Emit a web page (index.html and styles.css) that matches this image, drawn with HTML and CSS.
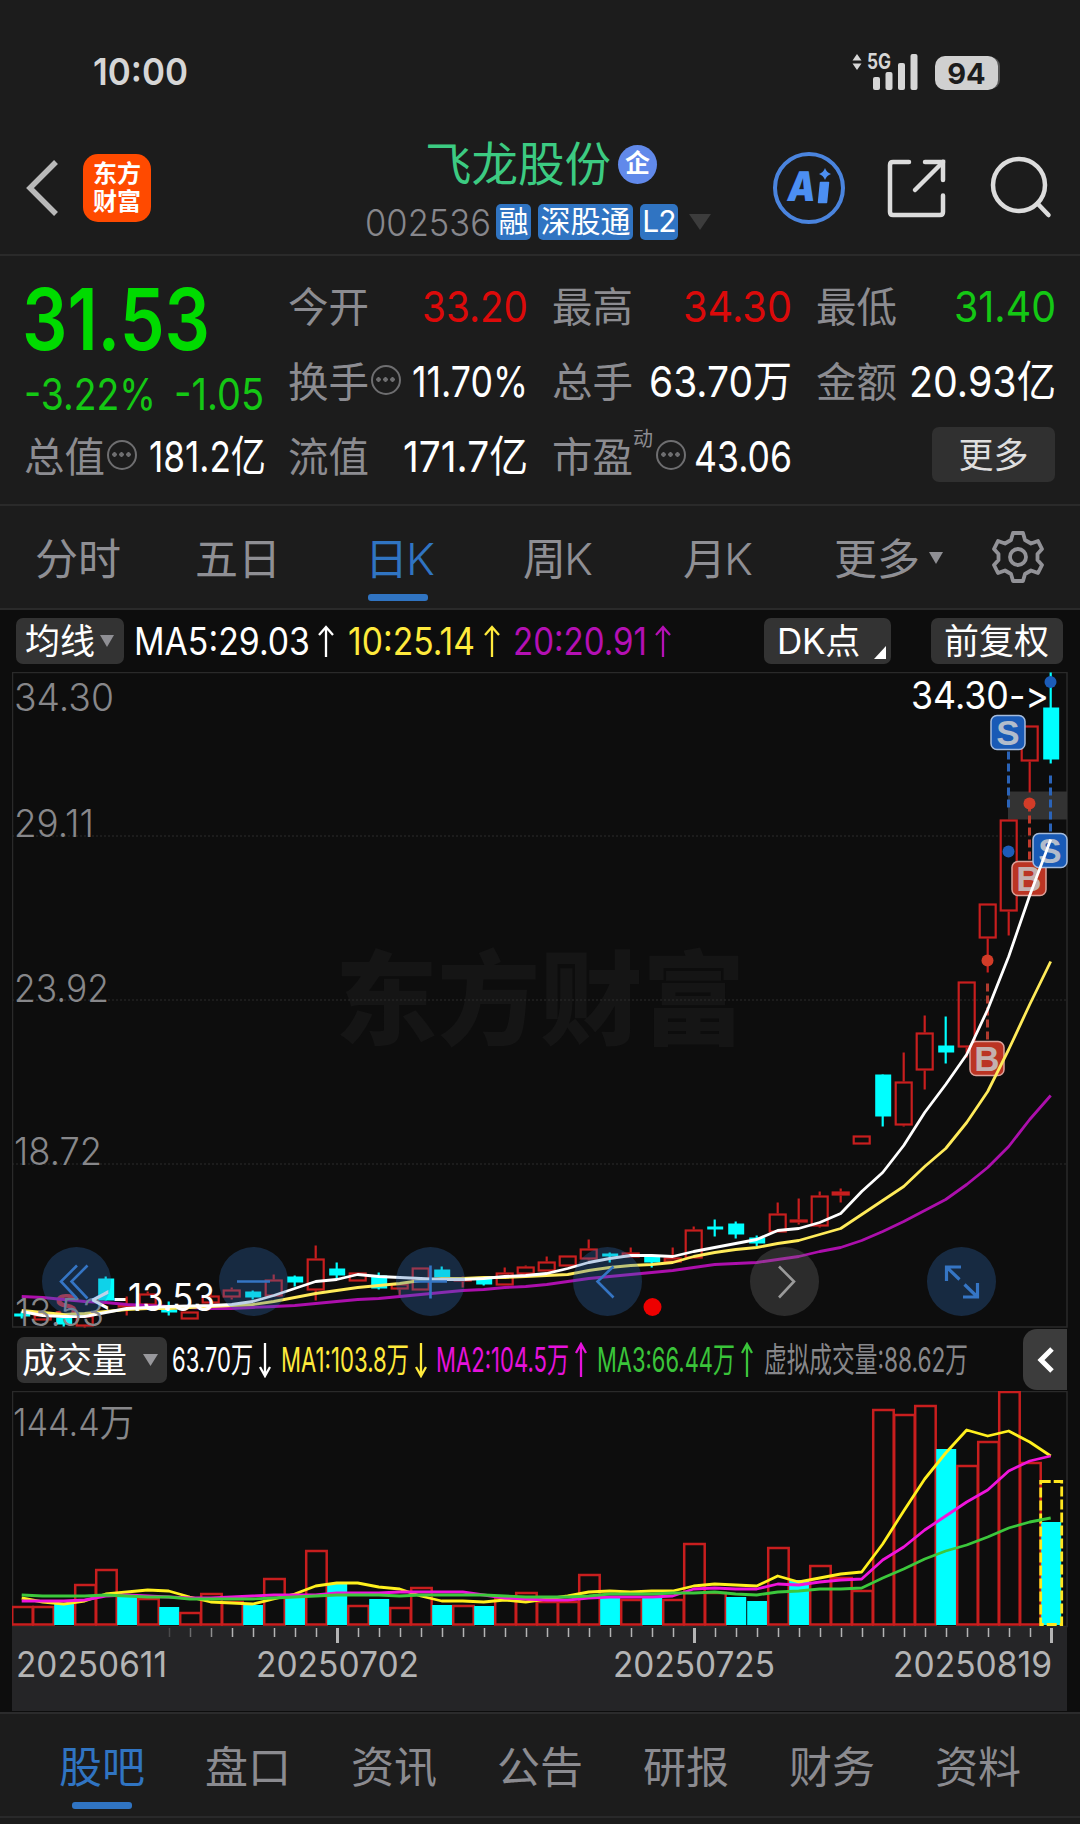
FILE: index.html
```html
<!DOCTYPE html>
<html lang="zh-CN">
<head>
<meta charset="utf-8">
<title>飞龙股份 002536</title>
<link rel="stylesheet" href="styles.css">
</head>
<body>
<div class="status">
  <span class="clock" data-fit="95">10:00</span>
  <svg class="arrows" width="10" height="16" viewBox="0 0 10 16"><path d="M5 0l4.500 6.500h-9zM5 16l4.500-6.500h-9z" fill="#d6d6d6"/></svg>
  <span class="fiveg" data-fit="24">5G</span>
  <svg class="signal" width="52" height="38" viewBox="0 0 52 38"><g fill="#d6d6d6"><rect x="6" y="24" width="7" height="13" rx="2"/><rect x="18.500" y="19" width="7" height="18" rx="2"/><rect x="31" y="10" width="7" height="27" rx="2"/><rect x="43.500" y="1" width="7" height="36" rx="2"/></g></svg>
  <span class="battery">94</span>
</div>

<header class="header">
  <svg class="back" width="34" height="58" viewBox="0 0 34 58"><path d="M31 3L5 29l26 26" fill="none" stroke="#b9b9b9" stroke-width="5.500"/></svg>
  <div class="logo"><span>东方</span><span>财富</span></div>
  <div class="title">
    <div class="name-row"><span class="name">飞龙股份</span><span class="badge">企</span></div>
    <div class="code-row"><span class="code" data-fit="126">002536</span><span class="tag t1">融</span><span class="tag t3">深股通</span><span class="tag t2">L2</span><svg width="22" height="16" viewBox="0 0 22 16"><path d="M0 0h22L11 16z" fill="#3c3c3c"/></svg></div>
  </div>
  <svg class="ai" width="76" height="76" viewBox="0 0 76 76"><circle cx="38" cy="38" r="34" fill="none" stroke="#4a84de" stroke-width="4"/><text transform="translate(15 51) skewX(-8)" class="ai-text" textLength="28" lengthAdjust="spacingAndGlyphs">A</text><path d="M49.500 32.500h8l-2 20h-8z" fill="#4c8ff2" stroke="#4c8ff2" stroke-width="1.500" stroke-linejoin="round"/><path d="M54 18q1.500 4.500 6 6-4.500 1.500-6 6-1.500-4.500-6-6 4.500-1.500 6-6z" fill="#4c8ff2"/></svg>
  <svg class="share" width="62" height="62" viewBox="0 0 62 62"><g fill="none" stroke="#dcdcdc" stroke-width="4.500" stroke-linecap="round"><path d="M22 5H6q-3 0-3 3v47q0 3 3 3h47q3 0 3-3V38.500M38 5h18v18"/><path d="M56 5L28 33"/></g></svg>
  <svg class="search" width="66" height="66" viewBox="0 0 66 66"><g fill="none" stroke="#dcdcdc" stroke-width="4.500" stroke-linecap="round"><circle cx="32" cy="31" r="26"/><path d="M50.500 49.500l11 11.500"/></g></svg>
</header>

<section class="quote">
  <div class="last">
    <span class="price" data-fit="188">31.53</span>
    <div class="change"><span data-fit="132">-3.22%</span><span data-fit="90">-1.05</span></div>
    <div class="cell"><label>总值</label><i class="info"></i><b data-fit="117">181.2亿</b></div>
  </div>
  <div class="stats">
    <div class="cell"><label>今开</label><b class="up" data-fit="106">33.20</b></div>
    <div class="cell"><label>最高</label><b class="up" data-fit="109">34.30</b></div>
    <div class="cell"><label>最低</label><b class="down" data-fit="102">31.40</b></div>
    <div class="cell"><label>换手</label><i class="info"></i><b data-fit="116">11.70%</b></div>
    <div class="cell"><label>总手</label><b data-fit="143">63.70万</b></div>
    <div class="cell"><label>金额</label><b data-fit="147">20.93亿</b></div>
    <div class="cell"><label>流值</label><b data-fit="125">171.7亿</b></div>
    <div class="cell"><label>市盈<sup>动</sup></label><i class="info"></i><b data-fit="98">43.06</b></div>
    <div class="cell"><button class="more">更多</button></div>
  </div>
</section>

<nav class="periods">
  <a class="p1">分时</a><a class="p2">五日</a><a class="p3 active">日<span class="k">K</span></a><a class="p4">周<span class="k">K</span></a><a class="p5">月<span class="k">K</span></a><a class="p6">更多</a>
  <svg class="caret" width="14" height="12" viewBox="0 0 14 12"><path d="M0 0h14L7 12z" fill="#8f8f94"/></svg>
  <svg class="gear" width="54" height="54" viewBox="0 0 54 54"><g fill="none" stroke="#929297" stroke-width="3.800" stroke-linejoin="round"><path d="M22 3h10l2 7 6 3.500 7-2.500 4 8-4.500 5v6l4.500 5-4 8-7-2.500L34 44l-2 7H22l-2-7-6-3.500L7 43l-4-8 4.500-5v-6L3 19l4-8 7 2.500L20 10z"/><circle cx="27" cy="27" r="8"/></g></svg>
</nav>

<main class="charts">
  <div class="legend ma">
    <span class="pill line-pill">均线<svg width="14" height="12" viewBox="0 0 14 12"><path d="M0 0h14L7 12z" fill="#8f8f94"/></svg></span>
    <span class="white" data-fit="176">MA5:29.03</span><svg class="arrow" width="18" height="34" viewBox="0 0 18 34"><path d="M9 33V3M2 11l7-8 7 8" stroke="#fff"/></svg>
    <span class="yellow" data-fit="127">10:25.14</span><svg class="arrow" width="18" height="34" viewBox="0 0 18 34"><path d="M9 33V3M2 11l7-8 7 8" stroke="#ffea3c"/></svg>
    <span class="purple" data-fit="134">20:20.91</span><svg class="arrow" width="18" height="34" viewBox="0 0 18 34"><path d="M9 33V3M2 11l7-8 7 8" stroke="#b410b4"/></svg>
    <span class="pill dk">DK点<svg width="12" height="13" viewBox="0 0 12 13"><path d="M12 0v13H0z" fill="#fff"/></svg></span>
    <span class="pill adj">前复权</span>
  </div>
  <svg id="price" class="panel" width="1056" height="656" viewBox="12 672.500 1056 656"></svg>
  <div class="legend vol">
    <span class="pill vol-pill">成交量<svg width="15" height="12" viewBox="0 0 15 12"><path d="M0 0h15L7.500 12z" fill="#98989c"/></svg></span>
    <span class="white" data-fit="81">63.70万</span><svg class="arrow" width="12" height="36" viewBox="0 0 12 36"><path d="M6 1v33M1 25l5 9 5-9" stroke="#fff"/></svg>
    <span class="yellow" data-fit="128">MA1:103.8万</span><svg class="arrow" width="12" height="36" viewBox="0 0 12 36"><path d="M6 1v33M1 25l5 9 5-9" stroke="#ffea3c"/></svg>
    <span class="magenta" data-fit="133">MA2:104.5万</span><svg class="arrow" width="12" height="36" viewBox="0 0 12 36"><path d="M6 35V2M1 11l5-9 5 9" stroke="#e612dc"/></svg>
    <span class="green" data-fit="138">MA3:66.44万</span><svg class="arrow" width="12" height="36" viewBox="0 0 12 36"><path d="M6 35V2M1 11l5-9 5 9" stroke="#3ac43a"/></svg>
    <span class="gray" data-fit="204">虚拟成交量:88.62万</span>
    <span class="fold"><svg width="18" height="28" viewBox="0 0 18 28"><path d="M16 3L5 14l11 11" fill="none" stroke="#fff" stroke-width="5"/></svg></span>
  </div>
  <svg id="volume" class="panel" width="1056" height="320" viewBox="12 1392 1056 320"></svg>
</main>

<nav class="tabs">
  <a class="active">股吧</a><a>盘口</a><a>资讯</a><a>公告</a><a>研报</a><a>财务</a><a>资料</a>
</nav>
<script src="chart.js"></script>
</body>
</html>
```

FILE: styles.css
```css
* { box-sizing: border-box; }

body {
  margin: 0;
  width: 1080px;
  height: 1824px;
  overflow: hidden;
  background: #1c1c1c;
  color: #fff;
  font-family: Inter, "Noto Sans CJK SC", sans-serif;
}

svg { display: block; flex: none; }

[data-fit] {
  display: inline-block;
  flex: none;
  white-space: pre;
  transform-origin: 0 50%;
}

/* status bar */
.status {
  display: flex;
  align-items: flex-start;
  height: 115px;
  padding: 53px 0 0 93px;
}
.clock { margin-top: -4px; font-size: 37px; line-height: 46px; font-weight: 600; color: #d6d6d6; }
.arrows { margin: 1px 5px 0 664px; }
.fiveg { margin: -4px -24px 0 0; font-size: 21px; line-height: 26px; font-weight: 700; color: #d6d6d6; }
.signal { margin-right: 16px; }
.battery {
  width: 63px;
  height: 34px;
  margin-top: 3px;
  border-radius: 10px;
  background: #d0d0d0;
  box-shadow: 3px 0 0 -1px #555;
  color: #1c1c1c;
  font-size: 29px;
  line-height: 35px;
  font-weight: 700;
  text-align: center;
}

/* header */
.header {
  display: flex;
  align-items: flex-start;
  height: 141px;
  padding-top: 39px;
  border-bottom: 2px solid #2a2a2a;
}
.back { margin: 5px 24px 0 25px; }
.logo {
  display: grid;
  place-content: center;
  width: 68px;
  height: 68px;
  border-radius: 15px;
  background: #ff4a00;
  font-size: 24px;
  line-height: 28px;
  font-weight: 700;
}
.title { width: 350px; margin: -19px 0 0 214px; }
.name-row { display: flex; align-items: center; height: 58px; padding-left: 60px; }
.name { font-size: 46.5px; line-height: 58px; color: #3ccb82; }
.badge {
  width: 39px;
  height: 39px;
  margin-left: 7px;
  border-radius: 50%;
  background: #6189ea;
  font-size: 25px;
  line-height: 36px;
  font-weight: 700;
  text-align: center;
}
.code-row { display: flex; align-items: center; height: 36px; margin-top: 11px; }
.code { margin-right: 5px; font-size: 37px; font-weight: 350; color: #87878c; }
.tag {
  height: 36px;
  margin-right: 7px;
  border-radius: 5px;
  background: #3074c2;
  font-size: 30px;
  line-height: 34px;
  text-align: center;
}
.t1 { width: 35px; }
.t3 { width: 95px; }
.t2 { width: 38px; margin-right: 11px; letter-spacing: -1px; }
.ai { margin: -4px 40px 0 56px; }
.ai-text { font: 900 41px Inter, sans-serif; fill: #4c8ff2; }
.share { margin: 3px 38px 0 0; }

/* quote */
.quote {
  display: flex;
  height: 250px;
  padding: 15px 0 0 24px;
  border-bottom: 2px solid #2a2a2a;
}
.last { width: 264px; }
.price { height: 90px; margin: 4px 0 0 -2px; font-size: 85px; line-height: 90px; font-weight: 600; color: #00db00; }
.change { display: flex; gap: 18px; height: 70px; margin: -2px 0 0; font-size: 44px; line-height: 63px; font-weight: 400; color: #14c814; }
.last .cell { width: 241px; margin-top: -12px; }
.stats {
  display: grid;
  grid-template-columns: 239px 239px 239px;
  grid-template-rows: 75px 75px 75px;
  column-gap: 25px;
}
.cell { display: flex; align-items: center; height: 75px; }
.cell label { position: relative; flex: none; margin-top: -2px; color: #8c8c91; font-size: 40.5px; line-height: 58px; }
.cell sup { position: absolute; left: 81px; top: -3px; font-size: 20px; line-height: 26px; }
.cell b { margin: -5px -1px 0 auto; font-size: 43px; font-weight: 400; line-height: 60px; }
.cell .up { color: #dc0a0a; }
.cell .down { color: #14c814; }
.info {
  flex: none;
  width: 30px;
  height: 30px;
  margin: -8px 0 0 2px;
  border: 2.5px solid #6e6e70;
  border-radius: 50%;
  background:
    radial-gradient(circle at 5.500px 12.500px, #6e6e70 2px, transparent 2.500px),
    radial-gradient(circle at 12.500px 12.500px, #6e6e70 2px, transparent 2.500px),
    radial-gradient(circle at 19.500px 12.500px, #6e6e70 2px, transparent 2.500px);
}
label:has(sup) + .info { margin-left: 23px; }
.more {
  width: 125px;
  height: 55px;
  margin: -8px 0 0 116px;
  padding: 0 0 4px;
  border: 0;
  border-radius: 7px;
  background: #303030;
  color: #dedede;
  font: 35px/48px "Noto Sans CJK SC", sans-serif;
}

/* period tabs */
.periods {
  display: flex;
  align-items: flex-start;
  height: 104px;
  padding-left: 35px;
  border-bottom: 2px solid #2a2a2a;
  color: #8f8f94;
  font-size: 43px;
}
.periods a { height: 96px; line-height: 106px; white-space: nowrap; }
.k { display: inline-block; width: 27px; margin-left: -2px; font-weight: 350; transform: scaleX(1.04); transform-origin: 0 50%; }
.p1 { width: 160px; }
.p2 { width: 170px; }
.p3 { width: 158px; }
.p4 { width: 160px; }
.p5 { width: 151px; }
.p6 { width: 95px; }
.periods .active { color: #3074c2; }
.active::after {
  content: "";
  display: block;
  width: 60px;
  height: 7px;
  border-radius: 3px;
  background: #3074c2;
}
.periods .active::after { margin: -18px 0 0 3px; }
.caret { margin-top: 46px; }
.gear { margin: 24px 0 0 48px; }

/* charts */
.charts { height: 1102px; background: #0d0d0d; }
.panel { margin-left: 12px; }
.legend { display: flex; align-items: center; }
.arrow path { fill: none; stroke-width: 2.3; }
.ma { height: 62px; padding-left: 16px; font-size: 38px; }
.pill {
  display: flex;
  flex: none;
  align-items: center;
  height: 46px;
  border-radius: 7px;
  background: #333;
  font-size: 35px;
  line-height: 44px;
  white-space: nowrap;
}
.line-pill { width: 108px; margin-right: 10px; padding-left: 9px; gap: 5px; }
.ma .arrow { margin: 0 13px 0 7px; }
.ma .yellow + .arrow { margin-left: 8px; margin-right: 12px; }
.ma .purple + .arrow { margin-right: 0; margin-left: 7px; }
.dk { width: 127px; margin-left: 92px; padding-left: 13px; font-size: 35px; letter-spacing: -.3px; }
.dk svg { margin: 22px 0 0 14px; }
.adj { width: 132px; margin-left: 40px; padding-left: 13px; }
.vol { height: 63px; padding-left: 17px; font-size: 34px; line-height: 50px; }
.vol-pill { width: 150px; margin-right: 5px; padding-left: 5px; gap: 16px; }
.vol .arrow { margin: 0 10px 0 6px; }
.vol .yellow + .arrow { margin-right: 9px; }
.vol .green + .arrow { margin-right: 11px; }
.white { color: #fff; }
.yellow { color: #ffea3c; }
.purple { color: #b410b4; }
.magenta { color: #e612dc; }
.green { color: #3ac43a; }
.gray { color: #87878a; }
.fold {
  display: flex;
  align-items: center;
  width: 44px;
  height: 61px;
  margin-left: auto;
  margin-right: 13px;
  padding-left: 13px;
  border-radius: 14px 0 0 14px;
  background: #3c3c3c;
}
.label { font: 350 38px Inter, "Noto Sans CJK SC", sans-serif; fill: #87878a; }
.callout { font: 400 38px Inter, sans-serif; font-feature-settings: "calt" 0; fill: #fff; }
.date { font: 400 35px Inter, sans-serif; fill: #b4b4b4; }
.mark { font: 700 35px "Liberation Sans", sans-serif; text-anchor: middle; }
.watermark { font: 900 102px "Noto Sans CJK SC", sans-serif; fill: #151515; }

/* bottom tabs */
.tabs {
  display: flex;
  height: 106px;
  padding-left: 59px;
  border-top: 2px solid #2b2b2c;
  border-bottom: 2px solid #29292a;
  color: #8b8b90;
  font-size: 43px;
  line-height: 106px;
}
.tabs a { flex: none; width: 146px; height: 100px; }
.tabs .active { color: #3074c2; }
.tabs .active::after { margin: -18px 0 0 13px; }
```

FILE: chart.js
```js
document.querySelectorAll('[data-fit]').forEach(el => {
  const w = +el.dataset.fit;
  const natural = el.getBoundingClientRect().width;
  el.style.width = w + 'px';
  el.style.transform = `scaleX(${w / natural})`;
});

const RED = '#c81e1e', CYAN = '#00ffff';
const X = i => 21.7 + 21 * i;
const line = (ys, color, w = 2.8) =>
  `<polyline points="${ys.map((y, i) => X(i) + ',' + y).join(' ')}" fill="none" stroke="${color}" stroke-width="${w}" stroke-linejoin="round"/>`;
const text = (cls, x, y, w, s) =>
  `<text class="${cls}" x="${x}" y="${y}" textLength="${w}" lengthAdjust="spacingAndGlyphs">${s}</text>`;

// direction, high, body top, body bottom, low
const candles = [
  ['c',1312,1314,1317,1319],['r',1315,1315,1321,1321],['c',1318,1318,1325,1327],['r',1316,1316,1327,1328],['c',1277,1279,1301,1301],
  ['r',1297,1305,1308,1316],['r',1292,1294,1306,1306],['c',1302,1310,1313,1316],['r',1312,1312,1320,1320],['r',1291,1296,1304,1304],
  ['r',1288,1290,1298,1300],['c',1291,1292,1298,1300],['r',1275,1280,1297,1297],['c',1276,1277,1283,1287],['r',1246,1259,1291,1301],
  ['c',1263,1269,1276,1279],['r',1273,1273,1282,1282],['c',1273,1276,1289,1290],['r',1284,1284,1290,1296],['r',1268,1268,1291,1291],
  ['c',1267,1270,1278,1281],['r',1277,1279,1282,1288],['c',1279,1279,1285,1286],['r',1268,1273,1286,1286],['r',1266,1267,1275,1275],
  ['r',1257,1262,1272,1272],['r',1256,1256,1267,1267],['r',1240,1249,1260,1261],['c',1253,1254,1257,1263],['r',1248,1253,1258,1258],
  ['c',1257,1257,1263,1268],['r',1248,1258,1263,1263],['r',1227,1230,1259,1259],['c',1220,1227,1230,1237],['c',1222,1224,1235,1239],
  ['c',1236,1238,1244,1247],['r',1203,1214,1233,1233],['r',1199,1220,1223,1225],['r',1192,1196,1227,1228],['r',1189,1192,1196,1203],
  ['r',1136,1136,1145,1145],['c',1075,1075,1117,1127],['r',1053,1082,1126,1127],['r',1016,1033,1071,1090],['c',1017,1046,1053,1064],
  ['r',982,982,1048,1058],['r',904,904,939,973],['r',820,820,912,936],['r',726,726,762,793],['c',673,708,760,764]
];
const ma5 = [1312,1316,1317,1317,1313,1309,1308,1307,1306.5,1306,1305,1302,1296,1289,1282,1280,1275,1277,1278,1279,1280,1280,1279,1277,1276,1274,1269,1263,1259,1256,1256,1257,1252,1248,1244,1240,1231,1229,1223,1214,1192,1173,1146,1113,1085,1055,1010,957,896,840];
const ma10 = [1311,1313,1315,1314,1312,1310,1309,1309,1308,1307,1306,1305,1302,1298,1294,1291,1288,1286,1284,1281,1279,1279,1278,1278,1277,1276,1275,1271,1268,1266,1265,1263,1257,1253,1250,1248,1244,1241,1235,1229,1215,1201,1187,1167,1149,1123,1092,1050,1005,962];
const ma20 = [1297,1298,1300,1302,1303,1305,1306,1307,1308,1309,1309,1308,1307,1306,1304,1302,1300,1299,1297,1295,1293,1291,1290,1288,1287,1285,1282,1279,1277,1275,1273,1271,1268,1265,1264,1263,1260,1257,1252,1248,1241,1232,1222,1211,1200,1185,1168,1147,1120,1096];

const candle = ([d, hi, top, bot, lo], i) => {
  const x = X(i);
  if (d === 'c') {
    return `<path d="M${x} ${hi}V${lo}" stroke="${CYAN}" stroke-width="2.2"/><rect x="${x - 7.5}" y="${top}" width="16" height="${bot - top}" fill="${CYAN}"/>`;
  }
  return `<path d="M${x} ${hi}V${top}M${x} ${bot}V${lo}" stroke="${RED}" stroke-width="2.2"/>` +
    `<rect x="${x - 8}" y="${top + 1}" width="16" height="${Math.max(bot - top - 2, 1)}" fill="none" stroke="${RED}" stroke-width="2.2"/>`;
};
const dashes = (x, y, color) =>
  `<path d="M${x} ${y}v56" stroke="${color}" stroke-width="3" stroke-dasharray="8 4"/>`;
const marker = (x, y, s) => {
  const blue = s === 'S';
  return `<rect x="${x - 17}" y="${y - 17}" width="34" height="34" rx="6" fill="${blue ? '#195ab6' : '#bb3423'}" stroke="${blue ? '#a4bbdc' : '#dba29b'}" stroke-width="1.5"/>` +
    `<text class="mark" x="${x}" y="${y + 12.5}" fill="${blue ? '#b2bccb' : '#c4b1af'}">${s}</text>`;
};
const disc = (x, color) => `<circle cx="${x}" cy="1282" r="34.500" fill="${color}" fill-opacity=".31"/>`;

document.getElementById('price').innerHTML =
  '<rect x="12.500" y="673" width="1054.500" height="654.500" fill="none" stroke="#2a2a2a" stroke-width="1.500"/>' +
  text('watermark', 335, 1037, 410, '东方财富') +
  [836, 1000, 1164].map(y => `<path d="M12 ${y}.5H1067" stroke="#2c2c2c" stroke-dasharray="2 2"/>`).join('') +
  '<rect x="1008" y="792" width="59" height="28" fill="#333"/>' +
  text('label', 14, 711, 100, '34.30') + text('label', 14, 837, 80, '29.11') + text('label', 14, 1002, 95, '23.92') + text('label', 14, 1165, 88, '18.72') +
  candles.map(candle).join('') +
  '<text class="mark" x="66" y="1318" fill="#c82a32">S</text>' +
  dashes(1008.5, 752, '#2a63b8') + dashes(1050.5, 776, '#2a63b8') + dashes(1029.5, 804, '#c0392b') + dashes(987.5, 984, '#b03a2e') +
  '<g fill="#1c5cb8"><circle cx="1050.500" cy="682.500" r="6"/><circle cx="1008.500" cy="852" r="6"/></g>' +
  '<g fill="#d23c28"><circle cx="1029.500" cy="804" r="6"/><circle cx="987.500" cy="961" r="6"/></g>' +
  marker(1008, 733, 'S') + marker(1029, 879, 'B') + marker(987, 1059, 'B') + marker(1050, 851, 'S') +
  line(ma20, '#ac0fac') + line(ma10, '#ffeb5a') + line(ma5, '#fff') +
  text('label', 15, 1326, 89, '13.53') +
  text('callout', 911, 709, 138, '34.30-&gt;') + text('callout', 89, 1311, 126, '&lt;-13.53') +
  [76.5, 253.5, 430.5, 607.5, 961.5].map(x => disc(x, '#306eb8')).join('') + disc(784.5, '#737373') +
  '<g fill="none" stroke="#3575c4" stroke-width="2.600">' +
  '<path d="M77 1266l-16 16 16 17M87.500 1266l-16 16 16 17M237 1282h33M414 1282h33M430.500 1266v33M613.500 1267l-16 15 16 16"/>' +
  '<path d="M961 1267.500h-14.500v14M946.500 1267.500l13 12.500M963 1297.500h14.500v-14M977.500 1297.500l-13-12.500" stroke-width="3.200"/></g>' +
  '<path d="M779 1267l15 15-15 16" fill="none" stroke="#9a9a9a" stroke-width="2.600"/>' +
  '<circle cx="652.500" cy="1307.500" r="9" fill="#ee0000"/>';

const vols = '1607r 1607r 1605c 1585r 1570r 1598c 1599r 1608c 1613r 1594r 1602r 1606c 1579r 1598c 1551r 1585c 1606r 1600c 1608r 1588r 1606c 1606r 1607c 1598r 1593r 1602r 1602r 1575r 1598c 1600r 1598c 1600r 1544r 1593r 1598c 1602c 1548r 1581c 1566r 1578r 1591r 1410r 1415r 1406r 1450c 1466r 1442r 1392r 1463r 1523c'.split(' ');
const v5 = [1599,1603,1605,1602,1595,1593,1591,1592,1598,1603,1604,1605,1600,1595,1587,1584,1584,1588,1590,1597,1602,1602,1603,1601,1603,1600,1597,1593,1592,1593,1592,1592,1587,1585,1586,1587,1577,1583,1579,1575,1573,1545,1512,1480,1454,1431,1437,1432,1443,1457];
const v10 = [1602,1602,1602,1601,1597,1596,1597,1598,1599,1599,1598,1597,1596,1596,1596,1594,1594,1594,1593,1593,1593,1593,1596,1599,1600,1601,1601,1599,1598,1598,1598,1597,1590,1589,1590,1590,1585,1586,1583,1581,1580,1561,1548,1531,1517,1503,1491,1472,1462,1457];
const v20 = [1596,1597,1597,1597,1596,1597,1598,1598,1600,1600,1600,1600,1599,1598,1597,1596,1596,1596,1597,1596,1596,1596,1596,1597,1598,1598,1598,1597,1595,1595,1595,1594,1594,1593,1595,1596,1593,1592,1590,1590,1589,1579,1570,1560,1552,1546,1538,1529,1523,1519];

const bar = (v, i) => {
  const top = parseInt(v, 10), x = X(i);
  return v.endsWith('c')
    ? `<rect x="${x - 9.5}" y="${top}" width="20" height="${1626 - top}" fill="${CYAN}"/>`
    : `<rect x="${x - 9.5}" y="${top + 1}" width="20.500" height="${1624.5 - top}" fill="none" stroke="${RED}" stroke-width="2.500"/>`;
};
let ticks = '';
for (let i = 7; i < 50; i++) {
  const major = i === 15 || i === 32 || i === 49;
  ticks += `<path d="M${X(i) + 0.8} 1629v${major ? 15 : 9}" stroke="#b4b4b4" stroke-width="${major ? 3 : 1.5}" opacity="${i < 10 ? (i - 6) * 0.25 : 1}"/>`;
}
document.getElementById('volume').innerHTML =
  '<rect x="12.500" y="1392.500" width="1054.500" height="235" fill="none" stroke="#2a2a2a" stroke-width="1.500"/>' +
  '<rect x="12" y="1628" width="1055" height="84" fill="#252527"/>' +
  text('label', 13, 1437, 121, '144.4万') +
  vols.map(bar).join('') +
  `<rect x="${X(49) - 10}" y="1482.500" width="21" height="143" fill="none" stroke="#ffe61e" stroke-width="2.800" stroke-dasharray="10 3"/>` +
  line(v5, '#fff01e') + line(v10, '#f014dc') + line(v20, '#3cc83c') + ticks +
  text('date', 16, 1678, 151, '20250611') + text('date', 256, 1678, 163, '20250702') +
  text('date', 613, 1678, 162, '20250725') + text('date', 893, 1678, 159, '20250819');
```
